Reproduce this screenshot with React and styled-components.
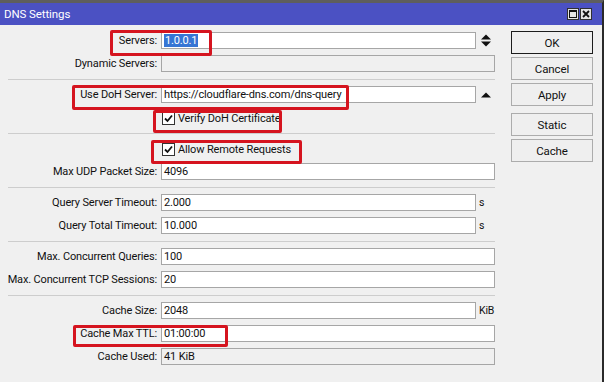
import React from 'react';
import styled, { createGlobalStyle } from 'styled-components';

const GlobalStyle = createGlobalStyle`
  html, body {
    margin: 0;
    background: #f0f0f0;
  }
  body {
    font-family: Roboto, "Liberation Sans", Arial, sans-serif;
    font-size: 11px;
    letter-spacing: -0.15px;
    color: #111;
  }
`;

const Window = styled.div`
  position: relative;
  box-sizing: border-box;
  width: 604px;
  height: 382px;
  background: #f0f0f0;
  border-top: 3px solid #5e5e5e;
  border-right: 2px solid #2a2a2a;
  overflow: hidden;
`;

const TitleBar = styled.div`
  height: 22px;
  background: #4b51c3;
  color: #fff;
  display: flex;
  align-items: center;
  justify-content: space-between;
  padding: 0 10px 0 4px;
  font-size: 11.5px;
  letter-spacing: -0.1px;
`;

const WinControls = styled.div`
  display: flex;
  gap: 1px;
`;

const WinBtn = styled.div`
  width: 12px;
  height: 12px;
  box-sizing: border-box;
  background: #e4e4e4;
  border: 1px solid #303030;
  display: flex;
  align-items: center;
  justify-content: center;
`;

const Body = styled.div`
  display: flex;
  padding-top: 6px;
`;

const FormCol = styled.div`
  width: 497px;
  display: flex;
  flex-direction: column;
`;

const Row = styled.div`
  display: flex;
  height: 23px;
  gap: 4px;
`;

const Label = styled.div`
  width: 157px;
  text-align: right;
  line-height: 17px;
  padding-top: 1px;
  white-space: nowrap;
`;

const FieldWrap = styled.div`
  width: 334px;
  display: flex;
  padding-top: 1px;
`;

const Field = styled.div`
  flex: 1;
  height: 17px;
  box-sizing: border-box;
  border: 1px solid #a6a6a6;
  background: ${p => (p.$disabled ? '#f0f0f0' : '#fff')};
  padding: 0 2px;
  line-height: 15px;
  white-space: nowrap;
  overflow: hidden;
`;

const Selected = styled.span`
  background: #3675d4;
  color: #fff;
  padding: 0 1px;
`;

const Adorn = styled.div`
  width: 19px;
  height: 17px;
  display: flex;
  align-items: center;
  justify-content: ${p => (p.$text ? 'flex-start' : 'center')};
  padding-left: ${p => (p.$text ? '3px' : '0')};
  box-sizing: border-box;
  font-size: 10.5px;
  white-space: nowrap;
`;

const Separator = styled.div`
  margin: 2px 0 5px 8px;
  width: 487px;
  height: 1px;
  background: #cdcdcd;
`;

const CheckRow = styled.label`
  display: flex;
  align-items: center;
  gap: 3px;
  height: 20px;
  margin-bottom: 3px;
  padding-left: 162px;
`;

const Box = styled.span`
  width: 13px;
  height: 13px;
  box-sizing: border-box;
  background: #fff;
  border: 1px solid #333;
  display: flex;
  align-items: center;
  justify-content: center;
`;

const ButtonCol = styled.div`
  width: 82px;
  margin-left: 14px;
  display: flex;
  flex-direction: column;
  gap: 3px;
`;

const Button = styled.button`
  width: 82px;
  height: 23px;
  box-sizing: border-box;
  margin: 0;
  margin-top: ${p => (p.$spaced ? '4px' : '0')};
  padding: 0;
  background: #efefef;
  border: 1px solid ${p => (p.$primary ? '#1c1c1c' : '#acacac')};
  font-family: inherit;
  font-size: 11.5px;
  letter-spacing: -0.1px;
  color: #111;
`;

const Highlight = styled.div`
  position: absolute;
  left: ${p => p.$x}px;
  top: ${p => p.$y}px;
  width: ${p => p.$w}px;
  height: ${p => p.$h}px;
  box-sizing: border-box;
  border: 3px solid #d5141f;
  border-radius: 2px;
  pointer-events: none;
`;

const SpinArrows = () => (
  <svg width="10" height="13" viewBox="0 0 10 13">
    <path d="M0 5.5 L5 0.5 L10 5.5 Z" fill="#111" />
    <path d="M0 7.5 L10 7.5 L5 12.5 Z" fill="#111" />
  </svg>
);

const UpArrow = () => (
  <svg width="10" height="6" viewBox="0 0 10 6">
    <path d="M0 5.5 L5 0.5 L10 5.5 Z" fill="#111" />
  </svg>
);

const Check = () => (
  <svg width="9" height="9" viewBox="0 0 9 9">
    <path d="M1 4.5 L3.5 7 L8 1.5" stroke="#111" strokeWidth="1.8" fill="none" />
  </svg>
);

function TextRow({ label, value, disabled, adorn }) {
  return (
    <Row>
      <Label>{label}</Label>
      <FieldWrap>
        <Field $disabled={disabled}>{value}</Field>
        {adorn !== undefined && (
          <Adorn $text={typeof adorn === 'string'}>{adorn}</Adorn>
        )}
      </FieldWrap>
    </Row>
  );
}

function CheckItem({ children }) {
  return (
    <CheckRow>
      <Box>
        <Check />
      </Box>
      {children}
    </CheckRow>
  );
}

export default function App() {
  return (
    <Window>
      <GlobalStyle />
      <TitleBar>
        <span>DNS Settings</span>
        <WinControls>
          <WinBtn>
            <svg width="8" height="8" viewBox="0 0 8 8">
              <rect x="0.5" y="0.5" width="7" height="7" fill="none" stroke="#111" />
              <rect x="0" y="0" width="8" height="2" fill="#111" />
            </svg>
          </WinBtn>
          <WinBtn>
            <svg width="8" height="8" viewBox="0 0 8 8">
              <path d="M1 1 L7 7 M7 1 L1 7" stroke="#111" strokeWidth="1.8" />
            </svg>
          </WinBtn>
        </WinControls>
      </TitleBar>

      <Body>
        <FormCol>
          <TextRow
            label="Servers:"
            value={<Selected>1.0.0.1</Selected>}
            adorn={<SpinArrows />}
          />
          <TextRow label="Dynamic Servers:" value="" disabled />
          <Separator />
          <TextRow
            label="Use DoH Server:"
            value="https://cloudflare-dns.com/dns-query"
            adorn={<UpArrow />}
          />
          <CheckItem>Verify DoH Certificate</CheckItem>
          <Separator />
          <CheckItem>Allow Remote Requests</CheckItem>
          <TextRow label="Max UDP Packet Size:" value="4096" />
          <Separator />
          <TextRow label="Query Server Timeout:" value="2.000" adorn="s" />
          <TextRow label="Query Total Timeout:" value="10.000" adorn="s" />
          <Separator />
          <TextRow label="Max. Concurrent Queries:" value="100" />
          <TextRow label="Max. Concurrent TCP Sessions:" value="20" />
          <Separator />
          <TextRow label="Cache Size:" value="2048" adorn="KiB" />
          <TextRow label="Cache Max TTL:" value="01:00:00" />
          <TextRow label="Cache Used:" value="41 KiB" disabled />
        </FormCol>

        <ButtonCol>
          <Button $primary>OK</Button>
          <Button>Cancel</Button>
          <Button>Apply</Button>
          <Button $spaced>Static</Button>
          <Button>Cache</Button>
        </ButtonCol>
      </Body>

      <Highlight $x={110} $y={27} $w={102} $h={26} />
      <Highlight $x={72} $y={82} $w={277} $h={25} />
      <Highlight $x={153} $y={107} $w={129} $h={23} />
      <Highlight $x={151} $y={137} $w={151} $h={24} />
      <Highlight $x={73} $y={322} $w={155} $h={22} />
    </Window>
  );
}
